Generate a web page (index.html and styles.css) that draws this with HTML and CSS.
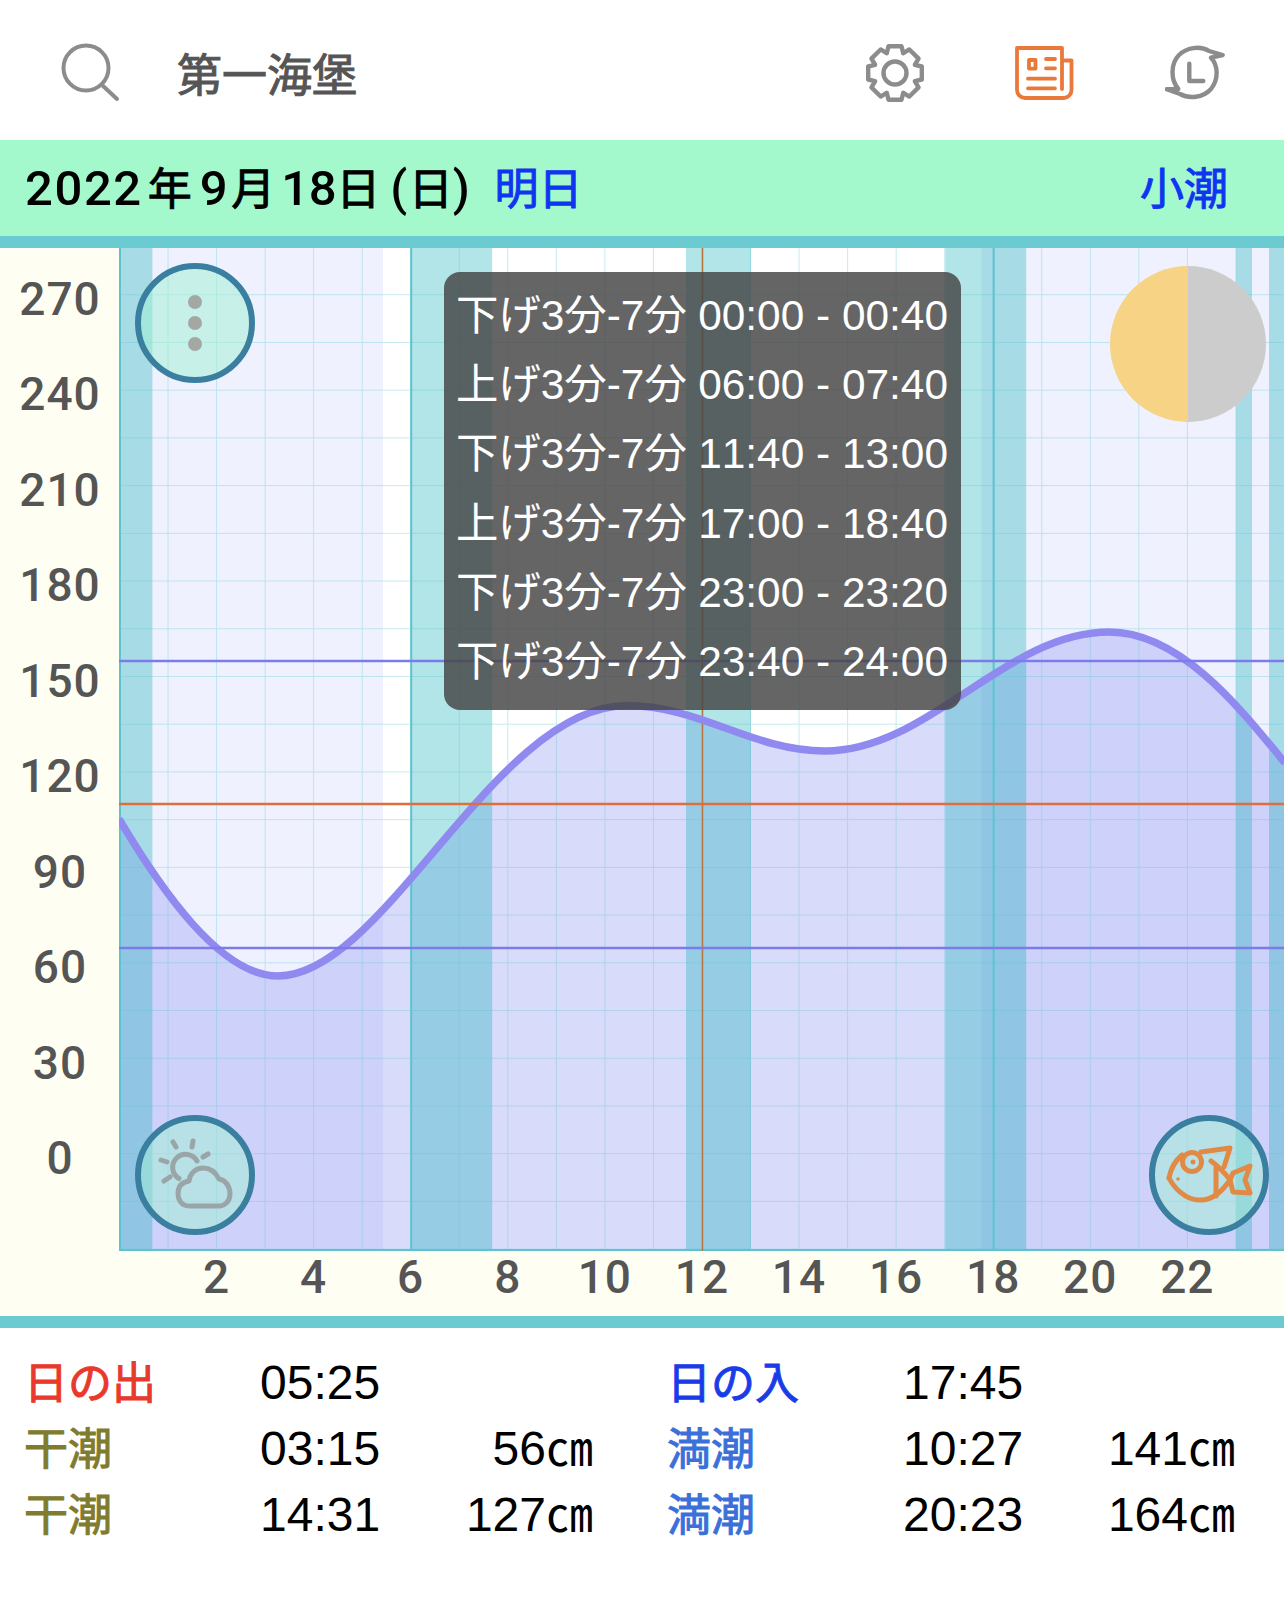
FILE: index.html
```html
<!DOCTYPE html>
<html lang="ja">
<head>
    <meta charset="UTF-8">
    <meta name="viewport" content="width=device-width, initial-scale=1.0">
    <title>第一海堡</title>
    <link rel="stylesheet" href="styles.css">
</head>
<body>
    <header class="top-bar">
        <svg class="icon-search" viewBox="0 0 60 60">
            <circle cx="25" cy="25" r="22.5"/>
            <path d="M41 42 L56 56"/>
        </svg>
        <div class="place">第一海堡</div>
        <svg class="icon-gear" viewBox="0 0 64 64">
            <defs>
                <path id="tooth" d="M-8.2 -20 L-6.5 -26.8 H6.5 L8.2 -20"/>
            </defs>
            <g transform="translate(32 32)">
                <use href="#tooth"/>
                <use href="#tooth" transform="rotate(45)"/>
                <use href="#tooth" transform="rotate(90)"/>
                <use href="#tooth" transform="rotate(135)"/>
                <use href="#tooth" transform="rotate(180)"/>
                <use href="#tooth" transform="rotate(225)"/>
                <use href="#tooth" transform="rotate(270)"/>
                <use href="#tooth" transform="rotate(315)"/>
                <circle r="11.5"/>
            </g>
        </svg>
        <svg class="icon-news" viewBox="0 0 60 56">
            <path d="M47 44 V3 H2 V45 a8 8 0 0 0 8 8 H49 a8 8 0 0 0 7.5 -8 V15.5 H47"/>
            <rect x="14" y="15" width="6.5" height="8.6"/>
            <path d="M31 14 H40 M31 23.3 H40 M13 33.7 H40 M13 43.3 H40"/>
        </svg>
        <svg class="icon-history" viewBox="0 0 60 60">
            <path d="M13.3 46 C5 36 6 20 14 12 C21 5 35 2 44 8 L57.7 12 L46 14.7 C53 22 54 36 46 46 C38 55 24 56 15 51 L1.7 46.3 Z"/>
            <path d="M24.3 20.7 V38 H38.3"/>
        </svg>
    </header>

    <div class="date-bar">
        <span class="date">2022<span class="kanji k-year">年</span>9<span class="kanji k-month">月</span><span class="k-num">18</span><span class="kanji k-day">日</span>(<span class="kanji">日</span>)</span>
        <span class="tomorrow">明日</span>
        <span class="tide-name">小潮</span>
    </div>

    <div class="chart-row">
        <div class="y-axis">
            <div>270</div>
            <div>240</div>
            <div>210</div>
            <div>180</div>
            <div>150</div>
            <div>120</div>
            <div>90</div>
            <div>60</div>
            <div>30</div>
            <div>0</div>
        </div>
        <div class="plot">
            <svg class="plot-svg" viewBox="-1 0 1165 1003">
                <defs>
                    <pattern id="grid" width="48.54" height="47.72" patternUnits="userSpaceOnUse" y="-0.5">
                        <path d="M48.04 0 V47.72 M0 47.22 H48.54" fill="none" stroke="#5cc4d0" stroke-opacity="0.34" stroke-width="1"/>
                    </pattern>
                </defs>
                <rect class="night" x="-1" y="0" width="264" height="1003"/>
                <rect class="night" x="861.5" y="0" width="303.5" height="1003"/>
                <path class="area" d="M-1 571 C40 640 100 728 157.8 728 C265 728 375 457.5 507.3 457.5 C579 457.5 633 503 704.8 503 C809 503 885 384 989.4 384 C1060 384 1120 460 1165 515 V1003 H-1 Z"/>
                <rect class="band" x="-1" y="0" width="33.4" height="1003"/>
                <rect class="band" x="291.2" y="0" width="81" height="1003"/>
                <rect class="band" x="566" y="0" width="65" height="1003"/>
                <rect class="band" x="825.2" y="0" width="81" height="1003"/>
                <rect class="band" x="1116" y="0" width="16" height="1003"/>
                <rect class="band" x="1149" y="0" width="16" height="1003"/>
                <rect x="-1" y="0" width="1166" height="1003" fill="url(#grid)"/>
                <path class="edge" d="M0 0 V1003 M291.2 0 V1003 M873.7 0 V1003 M-1 1002 H1165"/>
                <path class="now" d="M582.5 0 V1003"/>
                <path class="curve" d="M-1 571 C40 640 100 728 157.8 728 C265 728 375 457.5 507.3 457.5 C579 457.5 633 503 704.8 503 C809 503 885 384 989.4 384 C1060 384 1120 460 1165 515"/>
                <path class="level-blue" d="M-1 413 H1165 M-1 700 H1165"/>
                <path class="level-orange" d="M-1 556 H1165"/>
            </svg>

            <div class="moon"><span class="moon-lit"></span><span class="moon-dark"></span></div>

            <div class="tooltip">
                <div class="tip-row"><span>下げ3分-7分</span><span>00:00 - 00:40</span></div>
                <div class="tip-row"><span>上げ3分-7分</span><span>06:00 - 07:40</span></div>
                <div class="tip-row"><span>下げ3分-7分</span><span>11:40 - 13:00</span></div>
                <div class="tip-row"><span>上げ3分-7分</span><span>17:00 - 18:40</span></div>
                <div class="tip-row"><span>下げ3分-7分</span><span>23:00 - 23:20</span></div>
                <div class="tip-row"><span>下げ3分-7分</span><span>23:40 - 24:00</span></div>
            </div>

            <div class="round-btn btn-menu">
                <span class="dot"></span><span class="dot"></span><span class="dot"></span>
            </div>
            <div class="round-btn btn-weather">
                <svg viewBox="0 0 120 120">
                    <path d="M44 63.5 A13 13 0 1 1 62 46"/>
                    <path d="M38 27 L41 32 M58 26 L57 32 M73 39 L68 42 M26 45 L32 47 M29 66 L35 62"/>
                    <path d="M54 91 C46 91 43 84 43 79 C43 71 47 67 54 66 C55 58 61 53 68 53 C76 53 81 58 84 64 C91 65 95 72 95 79 C95 86 90 91 84 91 Z"/>
                </svg>
            </div>
            <div class="round-btn btn-fish">
                <svg viewBox="0 0 120 120">
                    <path d="M20 63 C24 71 36 86 52 85 C62 85 72 78 81 65 C76 58 70 52 62 46"/>
                    <path d="M20 63 C22 52 27 45 33 40"/>
                    <path d="M52 37 L81 33 L75 52"/>
                    <path d="M67 53 V81"/>
                    <path d="M81 65 L84 58 L101 51 L96 65 L101 78 L84 77 Z"/>
                    <circle cx="43" cy="47" r="9.5"/>
                    <circle class="pupil" cx="44" cy="47" r="2.5"/>
                    <circle class="pupil" cx="29" cy="64" r="1.8"/>
                </svg>
            </div>
        </div>
    </div>

    <div class="x-axis">
        <span>2</span><span>4</span><span>6</span><span>8</span><span>10</span><span>12</span>
        <span>14</span><span>16</span><span>18</span><span>20</span><span>22</span>
    </div>

    <div class="tide-table">
        <div class="name sunrise">日の出</div>
        <div class="time">05:25</div>
        <div class="level"></div>
        <div></div>
        <div class="name sunset">日の入</div>
        <div class="time">17:45</div>
        <div class="level"></div>

        <div class="name low">干潮</div>
        <div class="time">03:15</div>
        <div class="level">56<span class="unit">㎝</span></div>
        <div></div>
        <div class="name high">満潮</div>
        <div class="time">10:27</div>
        <div class="level">141<span class="unit">㎝</span></div>

        <div class="name low">干潮</div>
        <div class="time">14:31</div>
        <div class="level">127<span class="unit">㎝</span></div>
        <div></div>
        <div class="name high">満潮</div>
        <div class="time">20:23</div>
        <div class="level">164<span class="unit">㎝</span></div>
    </div>
</body>
</html>
```

FILE: styles.css
```css
body {
    margin: 0;
    width: 1284px;
    height: 1605px;
    overflow: hidden;
    background-color: #fff;
    font-family: "Liberation Sans", "Noto Sans CJK JP", sans-serif;
}

/* top bar */
.top-bar {
    height: 135px;
    padding-top: 5px;
    display: flex;
    align-items: center;
}

.top-bar svg {
    flex: none;
    fill: none;
    stroke: #8c8c8c;
    stroke-linecap: round;
    stroke-linejoin: round;
}

.icon-search {
    width: 60px;
    height: 60px;
    margin-left: 61px;
    stroke-width: 4;
}

.place {
    margin-left: 56px;
    font-size: 45px;
    color: #555;
    -webkit-text-stroke: 1px #555;
}

.icon-gear {
    width: 64px;
    height: 64px;
    margin-left: auto;
    stroke-width: 4.4;
}

.top-bar .icon-news {
    width: 60px;
    height: 56px;
    margin-left: 88.5px;
    stroke: #e9793a;
    stroke-width: 3.8;
}

.icon-history {
    width: 60px;
    height: 60px;
    margin-left: 90px;
    margin-right: 59px;
    stroke-width: 4.4;
}

/* date bar */
.date-bar {
    height: 92px;
    display: flex;
    align-items: center;
    padding: 0 56px 4px 25px;
    background-color: #a3f9cb;
    border-bottom: 12px solid #6bcbd0;
    font-size: 44px;
    -webkit-text-stroke: 1px;
}

.date {
    font-family: Roboto, "Noto Sans CJK JP", sans-serif;
    font-weight: 500;
    font-size: 49px;
    letter-spacing: 1.6px;
    color: #000;
    -webkit-text-stroke: 0;
}

.date .kanji {
    font-family: "Noto Sans CJK JP", sans-serif;
    font-weight: 400;
    font-size: 44px;
    letter-spacing: 0;
    -webkit-text-stroke: 1px #000;
}

.k-year { margin: 0 8px 0 5px; }
.k-month { margin: 0 6px 0 2px; }
.k-num { letter-spacing: -0.4px; }
.k-day { margin-right: 10px; }

.tomorrow {
    margin-left: 23px;
    color: #0f35f0;
}

.tide-name {
    margin-left: auto;
    color: #0f35f0;
}

/* chart */
.chart-row {
    height: 1003px;
    display: flex;
    background-color: #fefff2;
}

.y-axis {
    width: 119px;
    flex: none;
    padding: 4px 0 0 1px;
    box-sizing: border-box;
}

.y-axis div {
    height: 95.45px;
    line-height: 95.45px;
    text-align: center;
    font-family: Roboto, sans-serif;
    font-weight: 500;
    font-size: 46px;
    letter-spacing: 1px;
    color: #555;
}

.plot {
    flex: 1;
    min-width: 0;
    position: relative;
    background-color: #fff;
}

.plot-svg {
    display: block;
    width: 1165px;
    height: 1003px;
}

.night { fill: #eff2fe; }
.area { fill: rgba(128, 135, 242, 0.3); }
.band { fill: rgba(0, 170, 180, 0.3); }
.edge { fill: none; stroke: #5fc3cf; stroke-width: 2; }
.now { fill: none; stroke: #b9763f; stroke-width: 1.5; }
.curve { fill: none; stroke: #9089f0; stroke-width: 7.5; }
.level-blue { fill: none; stroke: #7d7bea; stroke-width: 2.6; }
.level-orange { fill: none; stroke: #dd6f3c; stroke-width: 2.6; }

.moon {
    position: absolute;
    left: 991px;
    top: 18px;
    width: 156px;
    height: 156px;
    border-radius: 50%;
    overflow: hidden;
    display: flex;
}

.moon-lit {
    width: 50%;
    background-color: #f6d385;
}

.moon-dark {
    width: 50%;
    background-color: #cccccc;
}

.tooltip {
    position: absolute;
    left: 325px;
    top: 24px;
    width: 517px;
    height: 438px;
    box-sizing: border-box;
    padding: 9px 13px 0 12px;
    border-radius: 16px;
    background-color: rgba(70, 70, 70, 0.83);
    color: #fff;
}

.tip-row {
    height: 69.2px;
    line-height: 69.2px;
    display: flex;
    justify-content: space-between;
    align-items: baseline;
    font-size: 42.4px;
    font-kerning: none;
    white-space: nowrap;
}

.round-btn {
    position: absolute;
    width: 120px;
    height: 120px;
    box-sizing: border-box;
    border: 6px solid #3a7fa0;
    border-radius: 50%;
    background-color: rgba(160, 240, 210, 0.5);
}

.round-btn svg {
    display: block;
    width: 120px;
    height: 120px;
    margin: -6px;
    fill: none;
    stroke-linecap: round;
    stroke-linejoin: round;
}

.btn-menu {
    left: 16px;
    top: 15px;
    display: flex;
    flex-direction: column;
    align-items: center;
    justify-content: center;
    gap: 7px;
}

.dot {
    width: 14px;
    height: 14px;
    border-radius: 50%;
    background-color: #a3a8a3;
}

.btn-weather {
    left: 16px;
    bottom: 16px;
}

.btn-weather svg {
    stroke: #9aa5a8;
    stroke-width: 5;
}

.btn-fish {
    right: 15px;
    bottom: 16px;
}

.btn-fish svg {
    stroke: #e08a45;
    stroke-width: 5;
}

.btn-fish .pupil {
    fill: #e08a45;
    stroke: none;
}

/* hour labels */
.x-axis {
    height: 65px;
    display: flex;
    padding-left: 168px;
    background-color: #fefff2;
    border-bottom: 12px solid #6bcbd0;
}

.x-axis span {
    width: 97.08px;
    flex: none;
    height: 53px;
    line-height: 53px;
    text-align: center;
    font-family: Roboto, sans-serif;
    font-weight: 500;
    font-size: 46px;
    letter-spacing: 1px;
    color: #555;
}

/* sunrise, sunset and tide times */
.tide-table {
    display: grid;
    grid-template-columns: 236px 120px 213px 74px 236px 120px 212px;
    grid-auto-rows: 66px;
    align-items: baseline;
    padding: 22px 0 0 24px;
    font-size: 48px;
    line-height: 66px;
    font-kerning: none;
    color: #000;
}

.name {
    font-size: 44px;
    -webkit-text-stroke: 1px;
}

.sunrise { color: #e8392c; }
.sunset { color: #1a3ce8; }
.low { color: #7f7b2f; }
.high { color: #3a70d8; }

.time {
    text-align: center;
}

.level {
    text-align: right;
}

.unit {
    font-size: 47px;
}
```
